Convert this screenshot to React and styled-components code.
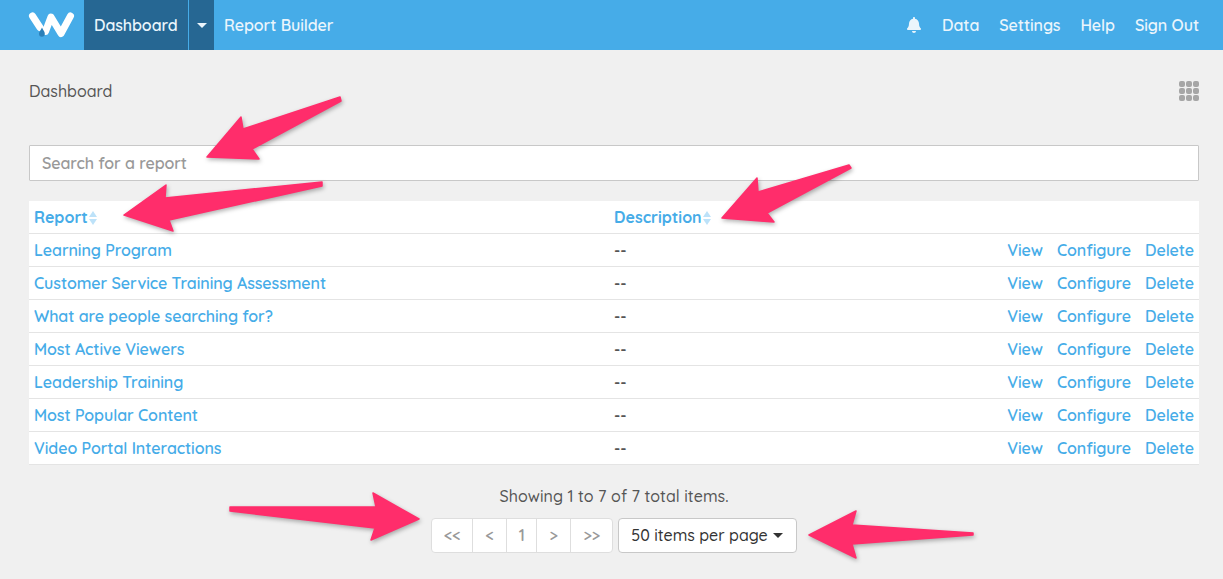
import React from "react";
import styled, { createGlobalStyle } from "styled-components";
import { FaBell } from "react-icons/fa";

const GlobalStyle = createGlobalStyle`
  html, body {
    margin: 0;
    padding: 0;
    background: #f0f0f0;
    font-family: "Quicksand", "Nunito", "Lato", "Noto Sans", sans-serif;
  }
`;

const reports = [
  "Learning Program",
  "Customer Service Training Assessment",
  "What are people searching for?",
  "Most Active Viewers",
  "Leadership Training",
  "Most Popular Content",
  "Video Portal Interactions",
];

const arrows = [
  "340,97 243,129 241,117 207,157 259,159 252,149 341,101",
  "322,182 165,198 166,185 124,215 173,231 169,220 322,186",
  "849,165 758,192 757,178 722,218 774,222 767,213 851,168",
  "230,507 376,507 373,493 419,519 371,540 375,528 230,511",
  "973,533 852,525 856,511 809,535 856,558 852,544 973,535",
];

function App() {
  return (
    <>
      <GlobalStyle />
      <Nav>
        <Logo viewBox="0 0 46 22" aria-hidden="true">
          <path d="M4.5 2 L12 13.5 M17.5 17.5 L23 3 L33 19.5 L42.5 2" fill="none" stroke="#fff" strokeWidth="7" strokeLinecap="round" strokeLinejoin="round" />
          <path d="M14 13.5 C15 16 16.8 17.3 16.8 19.8 A2.9 2.9 0 0 1 11 19.8 C11 17.3 13 16 14 13.5 Z" fill="#2a7fb8" />
        </Logo>
        <ActiveItem>Dashboard</ActiveItem>
        <CaretBox><Caret $color="#eaf5fc" /></CaretBox>
        <NavLink>Report Builder</NavLink>
        <NavRight>
          <FaBell size={16} color="#eaf5fc" />
          <NavLink>Data</NavLink>
          <NavLink>Settings</NavLink>
          <NavLink>Help</NavLink>
          <NavLink>Sign Out</NavLink>
        </NavRight>
      </Nav>
      <Page>
        <TitleRow>
          <Title>Dashboard</Title>
          <GridIcon>
            {Array.from({ length: 9 }).map((_, i) => <GridDot key={i} />)}
          </GridIcon>
        </TitleRow>
        <Search placeholder="Search for a report" />
        <Table>
          <thead>
            <tr>
              <Th>Report<SortIcon /></Th>
              <Th>Description<SortIcon /></Th>
              <Th />
            </tr>
          </thead>
          <tbody>
            {reports.map((name) => (
              <tr key={name}>
                <Td>{name}</Td>
                <DescCell>--</DescCell>
                <ActionCell>
                  <Action>View</Action>
                  <Action>Configure</Action>
                  <Action>Delete</Action>
                </ActionCell>
              </tr>
            ))}
          </tbody>
        </Table>
        <Showing>Showing 1 to 7 of 7 total items.</Showing>
        <PagerRow>
          <Pager>
            <PageBtn $w={40}>&lt;&lt;</PageBtn>
            <PageBtn $w={34}>&lt;</PageBtn>
            <PageBtn $w={30}>1</PageBtn>
            <PageBtn $w={34}>&gt;</PageBtn>
            <PageBtn $w={42}>&gt;&gt;</PageBtn>
          </Pager>
          <PerPage>50 items per page<Caret $color="#333" /></PerPage>
        </PagerRow>
      </Page>
      <Overlay viewBox="0 0 1223 579" aria-hidden="true">
        {arrows.map((points) => (
          <polygon key={points} points={points} fill="#ff2d6b" stroke="#ff2d6b" strokeWidth="1.5" strokeLinejoin="round" />
        ))}
      </Overlay>
    </>
  );
}

export default App;

const SortIcon = () => (
  <SortSvg viewBox="0 0 8 14" aria-hidden="true">
    <path d="M4 0 L8 6 L0 6 Z" fill="#bde2f9" />
    <path d="M4 14 L8 8 L0 8 Z" fill="#bde2f9" />
  </SortSvg>
);

const Caret = styled.span`
  width: 0;
  height: 0;
  border-left: 5.5px solid transparent;
  border-right: 5.5px solid transparent;
  border-top: 5.5px solid ${(p) => p.$color};
`;

const Nav = styled.nav`
  display: flex;
  align-items: stretch;
  height: 50px;
  padding: 0 24px 0 28px;
  background: #46ace8;
  color: #eaf5fc;
  font-size: 16px;
  font-weight: 600;
  letter-spacing: -0.08px;
`;

const Logo = styled.svg`
  width: 46px;
  height: 22px;
  align-self: center;
  margin-right: 10px;
  overflow: visible;
`;

const ActiveItem = styled.div`
  display: flex;
  align-items: center;
  padding: 0 10px;
  width: 104px;
  box-sizing: border-box;
  background: #266793;
`;

const CaretBox = styled.div`
  display: flex;
  align-items: center;
  justify-content: center;
  width: 25px;
  margin-left: 1px;
  margin-right: 10px;
  background: #266793;
`;

const NavLink = styled.div`
  display: flex;
  align-items: center;
`;

const NavRight = styled.div`
  display: flex;
  align-items: center;
  gap: 20px;
  margin-left: auto;
`;

const Page = styled.main`
  padding: 0 24px 0 29px;
`;

const TitleRow = styled.div`
  display: flex;
  align-items: center;
  justify-content: space-between;
  height: 81px;
  margin-bottom: 14px;
`;

const Title = styled.h1`
  margin: 0;
  font-size: 16px;
  font-weight: 500;
  color: #555;
`;

const GridIcon = styled.div`
  display: grid;
  grid-template-columns: repeat(3, 6px);
  grid-auto-rows: 6px;
  gap: 1px;
`;

const GridDot = styled.span`
  background: #a6a6a6;
  border-radius: 2px;
`;

const Search = styled.input`
  display: block;
  width: 100%;
  height: 36px;
  box-sizing: border-box;
  padding: 0 12px;
  border: 1px solid #c8c8c8;
  border-radius: 1px;
  background: #fff;
  font: inherit;
  font-size: 16px;
  font-weight: 600;
  letter-spacing: -0.1px;
  &::placeholder {
    color: #999;
    opacity: 1;
  }
`;

const Table = styled.table`
  width: 100%;
  margin-top: 20px;
  border-collapse: collapse;
  background: #fff;
  font-size: 16px;
  color: #46ace8;
`;

const Th = styled.th`
  height: 32px;
  padding: 0 5px;
  box-sizing: border-box;
  border-bottom: 1px solid #e4e4e4;
  font-weight: 700;
  text-align: left;
  &:first-child { width: 580px; }
`;

const SortSvg = styled.svg`
  width: 8px;
  height: 14px;
  margin-left: 1px;
  vertical-align: -2px;
`;

const Td = styled.td`
  height: 33px;
  padding: 0 5px;
  box-sizing: border-box;
  border-bottom: 1px solid #e4e4e4;
  font-weight: 600;
  letter-spacing: -0.08px;
`;

const DescCell = styled(Td)`
  color: #555;
`;

const ActionCell = styled(Td)`
  text-align: right;
`;

const Action = styled.span`
  margin-left: 14px;
`;

const Showing = styled.div`
  margin-top: 21px;
  text-align: center;
  font-size: 16px;
  font-weight: 500;
  letter-spacing: 0.06px;
  color: #555;
`;

const PagerRow = styled.div`
  display: flex;
  justify-content: center;
  gap: 5px;
  margin-top: 12px;
`;

const Pager = styled.div`
  display: flex;
  height: 35px;
  box-sizing: border-box;
  border: 1px solid #dedede;
  border-radius: 4px;
  background: #fff;
`;

const PageBtn = styled.div`
  display: flex;
  align-items: center;
  justify-content: center;
  box-sizing: border-box;
  width: ${(p) => p.$w}px;
  font-size: 16px;
  font-weight: 600;
  color: #999;
  & + & {
    border-left: 1px solid #dedede;
  }
`;

const PerPage = styled.div`
  display: flex;
  align-items: center;
  gap: 5px;
  height: 35px;
  box-sizing: border-box;
  padding: 0 13px 0 12px;
  border: 1px solid #c8c8c8;
  border-radius: 4px;
  background: #fff;
  font-size: 16px;
  font-weight: 500;
  color: #333;
`;

const Overlay = styled.svg`
  position: absolute;
  top: 0;
  left: 0;
  width: 1223px;
  height: 579px;
  pointer-events: none;
  filter: drop-shadow(1px 2px 2px rgba(0, 0, 0, 0.3));
`;
